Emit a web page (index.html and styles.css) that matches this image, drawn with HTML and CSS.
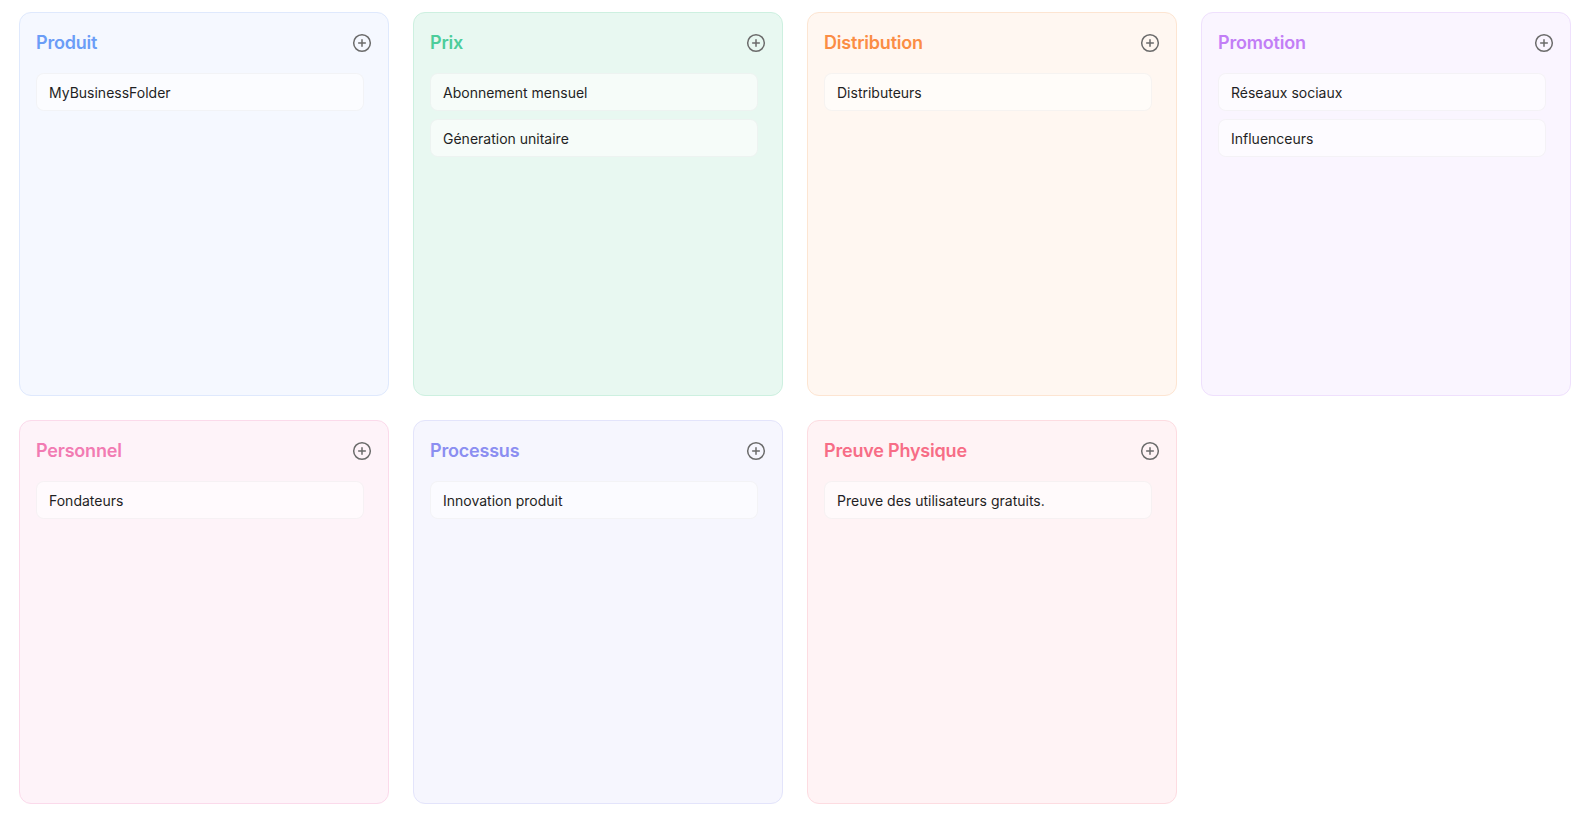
FILE: index.html
```html
<!DOCTYPE html>
<html lang="fr">
<head>
<meta charset="utf-8">
<title>Marketing Mix</title>
<link rel="stylesheet" href="styles.css">
</head>
<body>
<main class="board">
  <section class="card card-blue">
    <header class="card-head"><h2 class="card-title">Produit</h2><button class="add-btn" aria-label="Ajouter"><svg viewBox="0 0 24 24" width="20" height="20"><circle cx="12" cy="12" r="10"/><path d="M12 8v8M8 12h8"/></svg></button></header>
    <ul class="items"><li class="item">MyBusinessFolder</li></ul>
  </section>
  <section class="card card-green">
    <header class="card-head"><h2 class="card-title">Prix</h2><button class="add-btn" aria-label="Ajouter"><svg viewBox="0 0 24 24" width="20" height="20"><circle cx="12" cy="12" r="10"/><path d="M12 8v8M8 12h8"/></svg></button></header>
    <ul class="items"><li class="item">Abonnement mensuel</li><li class="item">Géneration unitaire</li></ul>
  </section>
  <section class="card card-orange">
    <header class="card-head"><h2 class="card-title">Distribution</h2><button class="add-btn" aria-label="Ajouter"><svg viewBox="0 0 24 24" width="20" height="20"><circle cx="12" cy="12" r="10"/><path d="M12 8v8M8 12h8"/></svg></button></header>
    <ul class="items"><li class="item">Distributeurs</li></ul>
  </section>
  <section class="card card-purple">
    <header class="card-head"><h2 class="card-title">Promotion</h2><button class="add-btn" aria-label="Ajouter"><svg viewBox="0 0 24 24" width="20" height="20"><circle cx="12" cy="12" r="10"/><path d="M12 8v8M8 12h8"/></svg></button></header>
    <ul class="items"><li class="item">Réseaux sociaux</li><li class="item">Influenceurs</li></ul>
  </section>
  <section class="card card-pink">
    <header class="card-head"><h2 class="card-title">Personnel</h2><button class="add-btn" aria-label="Ajouter"><svg viewBox="0 0 24 24" width="20" height="20"><circle cx="12" cy="12" r="10"/><path d="M12 8v8M8 12h8"/></svg></button></header>
    <ul class="items"><li class="item">Fondateurs</li></ul>
  </section>
  <section class="card card-indigo">
    <header class="card-head"><h2 class="card-title">Processus</h2><button class="add-btn" aria-label="Ajouter"><svg viewBox="0 0 24 24" width="20" height="20"><circle cx="12" cy="12" r="10"/><path d="M12 8v8M8 12h8"/></svg></button></header>
    <ul class="items"><li class="item">Innovation produit</li></ul>
  </section>
  <section class="card card-rose">
    <header class="card-head"><h2 class="card-title">Preuve Physique</h2><button class="add-btn" aria-label="Ajouter"><svg viewBox="0 0 24 24" width="20" height="20"><circle cx="12" cy="12" r="10"/><path d="M12 8v8M8 12h8"/></svg></button></header>
    <ul class="items"><li class="item">Preuve des utilisateurs gratuits.</li></ul>
  </section>
</main>
</body>
</html>
```

FILE: styles.css
```css
* { box-sizing: border-box; }
html, body { margin: 0; padding: 0; background: #ffffff; }
body {
  font-family: Inter, "Noto Sans", "Liberation Sans", sans-serif;
  color: #1f1f24;
}
.board {
  display: grid;
  grid-template-columns: repeat(4, 1fr);
  gap: 24px;
  padding: 12px 21px 12px 19px;
}
.card {
  height: 384px;
  border: 1px solid;
  border-radius: 12px;
  padding: 16px;
  display: flex;
  flex-direction: column;
}
.card-head {
  display: flex;
  align-items: center;
  justify-content: space-between;
  height: 28px;
  margin-bottom: 16px;
}
.card-title {
  margin: 0;
  font-size: 18px;
  font-weight: 600;
  line-height: 28px;
  letter-spacing: -0.2px;
}
.add-btn {
  width: 20px;
  height: 20px;
  padding: 0;
  border: 0;
  background: none;
  display: flex;
  cursor: pointer;
}
.add-btn svg {
  fill: none;
  stroke: #6b6b6b;
  stroke-width: 1.8;
  stroke-linecap: round;
}
.items {
  list-style: none;
  margin: 0;
  padding: 0 8px 0 0;
  display: flex;
  flex-direction: column;
  gap: 8px;
}
.item {
  height: 38px;
  display: flex;
  align-items: center;
  padding: 0 12px;
  font-size: 14px;
  font-weight: 400;
  background: rgba(255, 255, 255, 0.6);
  border: 1px solid rgba(0, 0, 0, 0.035);
  border-radius: 8px;
}
.card-blue { background: #f5f8ff; border-color: #dfe9fd; }
.card-blue .card-title { color: #6b9df7; }
.card-green { background: #e8f8f1; border-color: #cdf0e0; }
.card-green .card-title { color: #4ccd9b; }
.card-orange { background: #fff7f1; border-color: #fde5d2; }
.card-orange .card-title { color: #fb8d45; }
.card-purple { background: #faf5ff; border-color: #efe0fd; }
.card-purple .card-title { color: #c27ef6; }
.card-pink { background: #fef3f9; border-color: #fbdaeb; }
.card-pink .card-title { color: #f27bb3; }
.card-indigo { background: #f6f6fe; border-color: #e3e4fb; }
.card-indigo .card-title { color: #8b8ef1; }
.card-rose { background: #fff3f5; border-color: #fddce1; }
.card-rose .card-title { color: #f76d86; }
```
